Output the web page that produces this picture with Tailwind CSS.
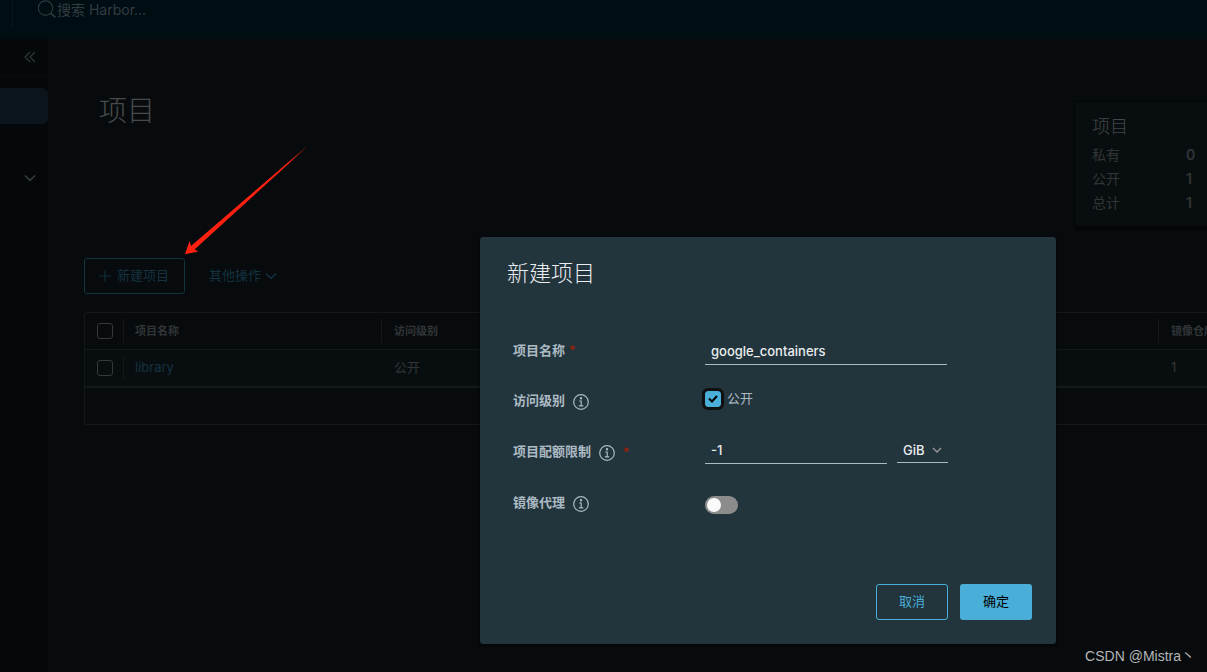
<!DOCTYPE html>
<html lang="zh-CN">
<head>
<meta charset="utf-8">
<title>Harbor</title>
<script src="https://cdn.jsdelivr.net/npm/@tailwindcss/browser@4"></script>
</head>
<body class="relative flex h-screen flex-col overflow-hidden bg-[#070b0d] font-['Inter','Noto_Sans_CJK_SC',sans-serif] text-[13px] text-[#323537]">

<header class="flex h-[39px] shrink-0 items-start bg-[#000d13] pl-3">
  <div class="h-7 w-px bg-[#08151b]"></div>
  <label class="flex flex-1 items-start pl-6">
    <svg class="size-5 shrink-0" viewBox="0 0 20 20" fill="none" stroke="#2f383c" stroke-width="1.2"><circle cx="8.500" cy="8" r="7.200"/><path d="M13.800 13.200l4.600 4.200" stroke-width="1.800"/></svg>
    <input type="text" aria-label="搜索" placeholder="搜索 Harbor..." class="h-[19px] flex-1 bg-transparent text-[14px] outline-none placeholder:text-[#333c40]">
  </label>
</header>

<div class="flex min-h-0 flex-1">
  <nav class="flex w-12 shrink-0 flex-col bg-[#04080a]">
    <button aria-label="收起" class="flex h-[37px] items-center justify-end border-b border-[#090d0f] pr-3">
      <svg class="size-3" viewBox="0 0 12 12" fill="none" stroke="#333739" stroke-width="1.1"><path d="M6 1L1 6l5 5M11 1L6 6l5 5"/></svg>
    </button>
    <a href="#" aria-label="项目" class="mt-3 h-9 rounded-r-md bg-[#0c151b]"></a>
    <button aria-label="展开" class="mt-9 flex h-9 items-center justify-end pr-3">
      <svg class="size-3" viewBox="0 0 12 12" fill="none" stroke="#3b3f41" stroke-width="1.5"><path d="M1 3.500l5 5 5-5"/></svg>
    </button>
  </nav>

  <main class="min-w-0 flex-1 overflow-hidden pl-9">
    <div class="flex h-[219px] items-start justify-between">
      <h1 class="mt-[52px] pl-[15px] text-[28px] leading-10 font-light text-[#484b4d]">项目</h1>
      <section class="mt-[62px] h-[126px] w-[133px] rounded-l-sm border border-r-0 border-[#030607] bg-[#080e10] px-[17px] pt-[13px] shadow-[0_3px_0_0_#030506]">
        <h2 class="mb-1 text-[18px] leading-6 font-light text-[#434648]">项目</h2>
        <dl class="grid grid-cols-[94px_auto] text-[14px] leading-6">
          <dt>私有</dt><dd class="font-semibold">0</dd>
          <dt>公开</dt><dd class="font-semibold">1</dd>
          <dt>总计</dt><dd class="font-semibold">1</dd>
        </dl>
      </section>
    </div>

    <div class="flex gap-6 text-[#143240]">
      <button class="flex h-9 min-w-[101px] items-center gap-1.5 rounded-[3px] border border-[#143240] px-[14px]">
        <svg class="size-3" viewBox="0 0 12 12" fill="none" stroke="#122c38" stroke-width="1.2"><path d="M6 0v12M0 6h12"/></svg>
        新建项目
      </button>
      <button class="flex h-9 items-center gap-1">其他操作
        <svg class="size-3" viewBox="0 0 12 12" fill="none" stroke="#143240" stroke-width="1.5"><path d="M1 3.500l5 5 5-5"/></svg>
      </button>
    </div>

    <div class="mt-[18px] h-[113px] rounded-l-[3px] border border-r-0 border-[#14181a]">
      <table class="w-full table-fixed border-separate border-spacing-0 text-left">
        <colgroup><col class="w-[39px]"><col class="w-[258px]"><col><col class="w-12"></colgroup>
        <thead>
          <tr class="h-[37px] text-[11px] *:border-b *:border-[#14181a]">
            <th class="p-0"><div class="flex h-6 items-center border-r border-[#14181a] pl-3"><input type="checkbox" aria-label="全选" class="size-4 appearance-none rounded-[3px] border border-[#34383a]"></div></th>
            <th class="p-0"><div class="h-6 border-r border-[#14181a] pl-[11px] leading-6">项目名称</div></th>
            <th class="p-0"><div class="h-6 border-r border-[#14181a] pl-3 leading-6">访问级别</div></th>
            <th class="p-0 pl-3 whitespace-nowrap">镜像仓库数</th>
          </tr>
        </thead>
        <tbody>
          <tr class="h-[38px] bg-[#080e10] *:border-b-2 *:border-[#14181a]">
            <td class="p-0"><div class="flex h-6 items-center border-r border-[#14181a] pl-3"><input type="checkbox" aria-label="library" class="size-4 appearance-none rounded-[3px] border border-[#34383a]"></div></td>
            <td class="p-0 pl-[11px]"><a href="#" class="text-[#143240]">library</a></td>
            <td class="p-0 pl-3">公开</td>
            <td class="p-0 pl-3">1</td>
          </tr>
        </tbody>
      </table>
    </div>
  </main>
</div>

<svg class="absolute top-[146px] left-[184px] h-[110px] w-[124px]" viewBox="0 0 124 110">
  <defs><linearGradient id="tail" gradientUnits="userSpaceOnUse" x1="123" y1="1" x2="104" y2="17"><stop offset="0" stop-color="#ff2010" stop-opacity=".2"/><stop offset="1" stop-color="#ff2010"/></linearGradient></defs>
  <path d="M1 108.300L5.500 95L7 100L122.500 .5L123 1L10.500 103.500L14.500 105.500Z" fill="url(#tail)"/>
</svg>

<form role="dialog" aria-labelledby="dlg" class="absolute top-[237px] left-[480px] w-[576px] rounded-[3px] bg-[#22343c] px-6 pt-5 pb-6 text-[#acbac3] shadow-[0_1px_2px_1px_#0008]">
  <h2 id="dlg" class="pl-[3px] text-[22px] leading-8 font-light text-[#eaedf0]">新建项目</h2>
  <div class="mt-9 grid grid-cols-[192px_auto] pl-[9px]">
    <div class="flex h-[51px] items-center gap-1">
      <label for="name" class="font-bold">项目名称</label><span class="text-[#a32100]">*</span>
    </div>
    <div class="flex h-[51px] items-center">
      <input id="name" type="text" value="google_containers" class="h-7 w-[242px] border-b border-[#acbac3] bg-transparent px-1.5 pt-0.5 text-[13px] font-medium text-[#eaedf0] outline-none">
    </div>

    <div class="flex h-[51px] items-center gap-2">
      <label for="pub" class="pb-0.5 font-bold">访问级别</label>
      <svg class="size-4" viewBox="0 0 16 16" fill="none" stroke="#acbac3" stroke-width="1.2"><circle cx="8" cy="8" r="7.300"/><path d="M6.200 7h2v4.500M5.800 11.800h4.500"/><circle cx="8" cy="4.300" r=".6" fill="#acbac3"/></svg>
    </div>
    <div class="flex h-[51px] items-center gap-1.5 pb-1.5">
      <span class="relative size-4">
        <input id="pub" type="checkbox" checked class="block size-4 appearance-none rounded-[3px] bg-[#49afd9] outline-3 outline-[#101010]">
        <svg class="pointer-events-none absolute inset-0 size-4" viewBox="0 0 16 16" fill="none" stroke="#000" stroke-width="2"><path d="M4 7.500l3 3 5-5.500"/></svg>
      </span>
      <label for="pub">公开</label>
    </div>

    <div class="flex h-[51px] items-center gap-2">
      <label for="quota" class="pb-0.5 font-bold">项目配额限制</label>
      <svg class="size-4" viewBox="0 0 16 16" fill="none" stroke="#acbac3" stroke-width="1.2"><circle cx="8" cy="8" r="7.300"/><path d="M6.200 7h2v4.500M5.800 11.800h4.500"/><circle cx="8" cy="4.300" r=".6" fill="#acbac3"/></svg>
      <span class="text-[#a32100]">*</span>
    </div>
    <div class="flex h-[51px] items-center gap-2.5 pb-1">
      <input id="quota" type="text" value="-1" class="h-[26px] w-[182px] border-b border-[#acbac3] bg-transparent px-1.5 text-[13px] font-medium text-[#eaedf0] outline-none">
      <span class="relative">
        <select aria-label="单位" class="block h-6 w-[51px] appearance-none border-b border-[#acbac3] bg-transparent pt-0.5 pl-1.5 text-[13px] font-medium text-[#eaedf0] outline-none"><option>GiB</option></select>
        <svg class="pointer-events-none absolute top-1.5 right-1.5 size-2.5" viewBox="0 0 10 10" fill="none" stroke="#9a9a9a" stroke-width="1.3"><path d="M1 3l4 4 4-4"/></svg>
      </span>
    </div>

    <div class="flex h-[51px] items-center gap-2">
      <label for="proxy" class="pb-0.5 font-bold">镜像代理</label>
      <svg class="size-4" viewBox="0 0 16 16" fill="none" stroke="#acbac3" stroke-width="1.2"><circle cx="8" cy="8" r="7.300"/><path d="M6.200 7h2v4.500M5.800 11.800h4.500"/><circle cx="8" cy="4.300" r=".6" fill="#acbac3"/></svg>
    </div>
    <div class="flex h-[51px] items-center pt-0.5">
      <input id="proxy" type="checkbox" role="switch" class="h-[18px] w-[33px] appearance-none rounded-full bg-[#8c8c8c] p-0.5 before:block before:size-3.5 before:rounded-full before:bg-[#fafafa]">
    </div>
  </div>
  <div class="mt-[55px] flex justify-end gap-3">
    <button type="button" class="h-9 w-[72px] rounded-[3px] border border-[#49afd9] text-[#49afd9]">取消</button>
    <button type="submit" class="h-9 w-[72px] rounded-[3px] bg-[#49afd9] text-black">确定</button>
  </div>
</form>

<p class="absolute right-3 bottom-1.5 font-['Liberation_Sans','Noto_Sans_CJK_SC',sans-serif] text-[14px] leading-5 text-[#b4b6b7]">CSDN @Mistra丶</p>
</body>
</html>
